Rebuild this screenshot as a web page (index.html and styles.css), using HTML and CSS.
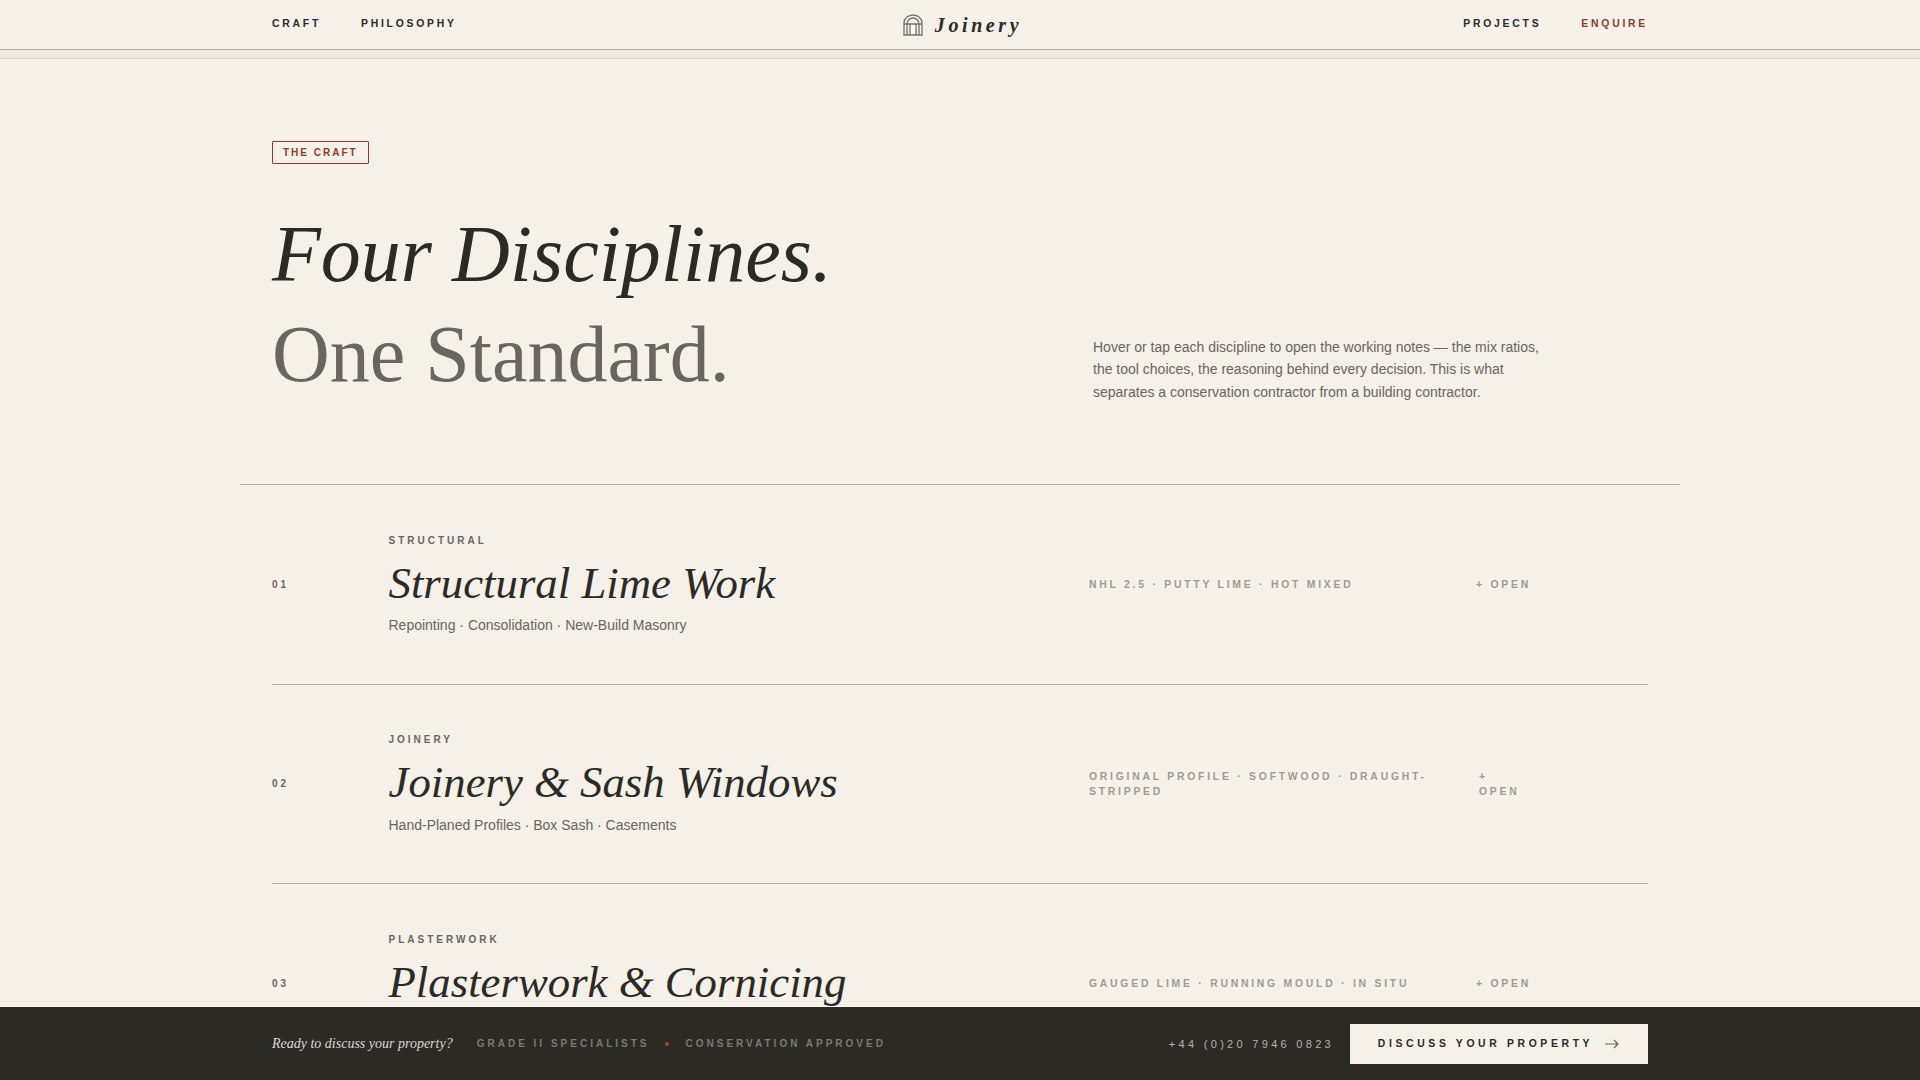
FILE: index.html
```html
<!DOCTYPE html>
<html lang="en">
    <head>
        <meta charset="UTF-8">
        <meta name="viewport" content="width=device-width, initial-scale=1.0">
        <title>Joinery - The Craft</title>
        <link rel="stylesheet" href="styles.css">
    </head>
    <body>
        <header class="site-header">
            <nav class="nav-inner">
                <div class="nav-links">
                    <a href="#">Craft</a>
                    <a href="#">Philosophy</a>
                </div>
                <a href="#" class="logo">
                    <svg class="logo-icon" viewBox="0 0 20 22" fill="none" stroke="#77716a" stroke-width="1.3">
                        <path d="M7 21V10.5h6V21z" fill="#fbf9fb" stroke="none"/>
                        <path d="M1 21V9a9 8 0 0 1 18 0v12z"/>
                        <path d="M4 21V10a6 6 0 0 1 12 0v11"/>
                        <path d="M7 21V10M13 21V10M1 10h18"/>
                    </svg>
                    <span>Joinery</span>
                </a>
                <div class="nav-links">
                    <a href="#">Projects</a>
                    <a href="#" class="nav-enquire">Enquire</a>
                </div>
            </nav>
        </header>
        <div class="header-band"></div>

        <main class="page">
            <section class="hero">
                <span class="tag">The Craft</span>
                <div class="hero-grid">
                    <h1>
                        <em>Four Disciplines.</em>
                        <span>One Standard.</span>
                    </h1>
                    <p class="hero-note">Hover or tap each discipline to open the working notes — the mix ratios, the tool choices, the reasoning behind every decision. This is what separates a conservation contractor from a building contractor.</p>
                </div>
            </section>

            <section class="disciplines">
                <article class="row">
                    <div class="row-num">01</div>
                    <div class="row-main">
                        <div class="row-kicker">Structural</div>
                        <h2>Structural Lime Work</h2>
                        <p>Repointing · Consolidation · New-Build Masonry</p>
                    </div>
                    <div class="row-tech">NHL 2.5 · Putty Lime · Hot Mixed</div>
                    <div class="row-open">+ Open</div>
                </article>
                <article class="row">
                    <div class="row-num">02</div>
                    <div class="row-main">
                        <div class="row-kicker">Joinery</div>
                        <h2>Joinery &amp; Sash Windows</h2>
                        <p>Hand-Planed Profiles · Box Sash · Casements</p>
                    </div>
                    <div class="row-tech">Original Profile · Softwood · Draught-Stripped</div>
                    <div class="row-open row-open-wrap">+ Open</div>
                </article>
                <article class="row">
                    <div class="row-num">03</div>
                    <div class="row-main">
                        <div class="row-kicker">Plasterwork</div>
                        <h2>Plasterwork &amp; Cornicing</h2>
                        <p>Lath &amp; Plaster · Run Mouldings · Ornament</p>
                    </div>
                    <div class="row-tech">Gauged Lime · Running Mould · In Situ</div>
                    <div class="row-open">+ Open</div>
                </article>
            </section>
        </main>

        <footer class="cta-bar">
            <div class="cta-inner">
                <div class="cta-left">
                    <em>Ready to discuss your property?</em>
                    <span>Grade II Specialists</span>
                    <i class="cta-dot"></i>
                    <span>Conservation Approved</span>
                </div>
                <div class="cta-right">
                    <span class="cta-phone">+44 (0)20 7946 0823</span>
                    <a href="#" class="cta-button">
                        Discuss Your Property
                        <svg viewBox="0 0 16 12" fill="none" stroke="#6b6560" stroke-width="1.2"><path d="M1 6h13M10 2l4 4-4 4"/></svg>
                    </a>
                </div>
            </div>
        </footer>
    </body>
</html>
```

FILE: styles.css
```css
:root{
    --paper: #f5f0e8;
    --ink: #2c2a25;
    --stone: #6b6560;
    --mute: #a09a92;
    --rule: #b8b2a8;
    --rust: #8f3a2e;
    --sans: "Liberation Sans", Arial, sans-serif;
    --serif: "Liberation Serif", "Times New Roman", serif;
}
*{
    box-sizing: border-box;
    margin: 0;
    padding: 0;
}
html, body{
    height: 100%;
    overflow: hidden;
}
body{
    /* faint stripes just above the bottom bar */
    background:
        linear-gradient(#efe9e0 0 1px, #f8f4ec 1px 3px, #efe9e0 3px 4px, #faf6ef 4px 6px) 0 1001px / 100% 6px no-repeat,
        var(--paper);
    color: var(--ink);
    font-family: var(--sans);
    display: flex;
    flex-direction: column;
}
a{
    color: inherit;
    text-decoration: none;
}

/* header */
.site-header{
    height: 50px;
    flex: none;
    border-bottom: 1px solid var(--rule);
}
.nav-inner{
    max-width: 1440px;
    height: 100%;
    margin: 0 auto;
    padding: 0 32px;
    display: grid;
    grid-template-columns: 1fr auto 1fr;
    align-items: center;
}
.nav-links{
    display: flex;
    gap: 40px;
    font-size: 10.4px;
    font-weight: 700;
    letter-spacing: .265em;
    text-transform: uppercase;
    margin-top: -3px;
}
.nav-links:last-child{
    justify-content: flex-end;
}
.nav-enquire{
    color: var(--rust);
}
.logo{
    display: flex;
    align-items: center;
    gap: 12px;
    margin-left: 5px;
    font-family: var(--serif);
    font-style: italic;
    font-weight: 700;
    font-size: 20px;
    letter-spacing: .18em;
}
.logo span{
    padding-top: 1px;
}
.logo-icon{
    width: 20px;
    height: 22px;
}
.header-band{
    height: 9px;
    flex: none;
    background: #efeae1;
    border-bottom: 1px solid #d9d4ca;
}

/* page */
.page{
    flex: 1;
    min-height: 0;
    overflow: hidden;
    width: 1440px;
    margin: 0 auto;
}
.hero{
    padding: 82px 32px 0;
}
.tag{
    display: inline-block;
    border: 1px solid var(--rust);
    border-radius: 1px;
    color: var(--rust);
    font-size: 10px;
    font-weight: 700;
    letter-spacing: .2em;
    text-transform: uppercase;
    padding: 5px 10px;
}
.hero-grid{
    display: grid;
    grid-template-columns: 821px 1fr;
    align-items: end;
    margin-top: 40px;
    padding-bottom: 80px;
}
h1{
    font-family: var(--serif);
    font-weight: 400;
    font-size: 80px;
    line-height: 100px;
}
h1 em, h1 span{
    display: block;
}
h1 span{
    color: var(--stone);
}
.hero-note{
    width: 460px;
    font-size: 14px;
    line-height: 22.6px;
    color: var(--stone);
    padding-bottom: .4px;
}

/* rows */
.disciplines{
    border-top: 1px solid var(--rule);
    padding: 0 32px;
}
.row{
    display: grid;
    grid-template-columns: 116.5px 700.5px 387px 172px;
    align-items: center;
    height: 199.6px;
    border-bottom: 1px solid var(--rule);
}
.row-num{
    font-size: 10px;
    font-weight: 700;
    letter-spacing: .3em;
    color: var(--stone);
}
.row-main{
    padding-top: 1.5px;
}
.row-kicker{
    font-size: 10px;
    font-weight: 700;
    letter-spacing: .3em;
    text-transform: uppercase;
    color: var(--stone);
}
.row-main h2{
    font-family: var(--serif);
    font-style: italic;
    font-weight: 400;
    font-size: 44.8px;
    line-height: 52px;
    margin-top: 11px;
}
.row-main p{
    font-size: 14px;
    line-height: 20px;
    color: var(--stone);
    margin-top: 6.5px;
}
.row-tech, .row-open{
    font-size: 10.4px;
    font-weight: 700;
    letter-spacing: .265em;
    line-height: 15px;
    text-transform: uppercase;
    color: var(--mute);
}
.row-tech{
    padding-right: 40px;
}
.row-open-wrap{
    width: 48px;
    margin-left: 3px;
}

/* bottom bar */
.cta-bar{
    position: fixed;
    left: 0;
    right: 0;
    bottom: 0;
    height: 73px;
    background: var(--ink);
}
.cta-inner{
    max-width: 1440px;
    height: 100%;
    margin: 0 auto;
    padding: 0 32px;
    display: flex;
    justify-content: space-between;
    align-items: center;
}
.cta-left{
    display: flex;
    align-items: center;
    gap: 16px;
    font-size: 10px;
    letter-spacing: .3em;
    text-transform: uppercase;
    color: #7d7870;
    font-weight: 700;
}
.cta-left em{
    font-family: var(--serif);
    font-size: 14px;
    font-weight: 400;
    letter-spacing: 0;
    text-transform: none;
    color: #ddd8cf;
    margin-right: 8px;
}
.cta-dot{
    width: 4px;
    height: 4px;
    border-radius: 50%;
    background: #a5402f;
}
.cta-right{
    display: flex;
    align-items: center;
    gap: 16px;
}
.cta-phone{
    font-size: 11px;
    letter-spacing: .3em;
    color: #b8b2a8;
}
.cta-button{
    display: flex;
    align-items: center;
    justify-content: center;
    gap: 11px;
    width: 298px;
    height: 40px;
    background: var(--paper);
    font-size: 10.4px;
    font-weight: 700;
    letter-spacing: .35em;
    text-transform: uppercase;
}
.cta-button svg{
    width: 16px;
    height: 12px;
}
```
